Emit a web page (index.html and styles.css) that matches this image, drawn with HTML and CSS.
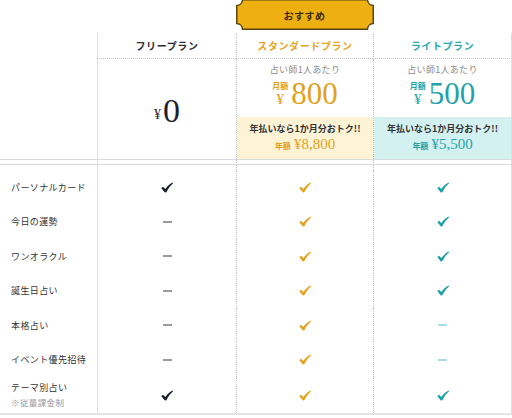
FILE: index.html
```html
<!DOCTYPE html>
<html lang="ja">
<head>
<meta charset="utf-8">
<link rel="stylesheet" href="styles.css">
</head>
<body>
<div class="table">
  <div class="row top">
    <div class="cell"></div>
    <div class="cell"></div>
    <div class="cell">
      <div class="badge">
        <svg class="badge-bg" width="138" height="31" viewBox="0 0 138 31"><path d="M6.5,0.75 H131.5 A6,6 0 0 0 137.25,6.5 V24.5 A6,6 0 0 0 131.5,30.25 H6.5 A6,6 0 0 0 0.75,24.5 V6.5 A6,6 0 0 0 6.5,0.75 Z" fill="#EDB010" stroke="#5b4313" stroke-width="1.5"/></svg>
        <span class="badge-text">おすすめ</span>
      </div>
    </div>
    <div class="cell"></div>
  </div>

  <div class="row head">
    <div class="cell label"></div>
    <div class="cell free"><span class="plan plan-free">フリープラン</span></div>
    <div class="cell std"><span class="plan plan-std">スタンダードプラン</span></div>
    <div class="cell lite"><span class="plan plan-lite">ライトプラン</span></div>
  </div>

  <div class="row price">
    <div class="cell label"></div>
    <div class="cell free price-free">
      <span class="yen-s">¥</span><span class="num">0</span>
    </div>
    <div class="cell std price-col">
      <div class="per">占い師1人あたり</div>
      <div class="amount gold">
        <div class="unit"><span class="monthly">月額</span><span class="yen">¥</span></div>
        <span class="num">800</span>
      </div>
      <div class="annual annual-std">
        <div class="annual-note">年払いなら1か月分おトク!!</div>
        <div class="annual-price gold"><span class="annual-label">年額</span><span class="annual-num">¥8,800</span></div>
      </div>
    </div>
    <div class="cell lite price-col">
      <div class="per">占い師1人あたり</div>
      <div class="amount teal">
        <div class="unit"><span class="monthly">月額</span><span class="yen">¥</span></div>
        <span class="num">500</span>
      </div>
      <div class="annual annual-lite">
        <div class="annual-note">年払いなら1か月分おトク!!</div>
        <div class="annual-price teal"><span class="annual-label">年額</span><span class="annual-num">¥5,500</span></div>
      </div>
    </div>
  </div>

  <div class="row sep">
    <div class="cell label"></div>
    <div class="cell free"></div>
    <div class="cell std"></div>
    <div class="cell lite"></div>
  </div>
  <div class="row spacer">
    <div class="cell label"></div>
    <div class="cell free"></div>
    <div class="cell std"></div>
    <div class="cell lite"></div>
  </div>

  <div class="row item">
    <div class="cell label">パーソナルカード</div>
    <div class="cell free mark"><svg class="check c-dark" viewBox="0 0 12 10"><path d="M0.3,5.4 L2,4.2 L4.3,6.6 C6.3,3.8 8.7,1.6 11.5,0 L12,0.9 C9.3,3.1 7.2,6 5.3,9.8 L3.8,10 Z"/></svg></div>
    <div class="cell std mark"><svg class="check c-gold" viewBox="0 0 12 10"><path d="M0.3,5.4 L2,4.2 L4.3,6.6 C6.3,3.8 8.7,1.6 11.5,0 L12,0.9 C9.3,3.1 7.2,6 5.3,9.8 L3.8,10 Z"/></svg></div>
    <div class="cell lite mark"><svg class="check c-teal" viewBox="0 0 12 10"><path d="M0.3,5.4 L2,4.2 L4.3,6.6 C6.3,3.8 8.7,1.6 11.5,0 L12,0.9 C9.3,3.1 7.2,6 5.3,9.8 L3.8,10 Z"/></svg></div>
  </div>
  <div class="row item">
    <div class="cell label">今日の運勢</div>
    <div class="cell free mark"><span class="dash d-dark"></span></div>
    <div class="cell std mark"><svg class="check c-gold" viewBox="0 0 12 10"><path d="M0.3,5.4 L2,4.2 L4.3,6.6 C6.3,3.8 8.7,1.6 11.5,0 L12,0.9 C9.3,3.1 7.2,6 5.3,9.8 L3.8,10 Z"/></svg></div>
    <div class="cell lite mark"><svg class="check c-teal" viewBox="0 0 12 10"><path d="M0.3,5.4 L2,4.2 L4.3,6.6 C6.3,3.8 8.7,1.6 11.5,0 L12,0.9 C9.3,3.1 7.2,6 5.3,9.8 L3.8,10 Z"/></svg></div>
  </div>
  <div class="row item">
    <div class="cell label">ワンオラクル</div>
    <div class="cell free mark"><span class="dash d-dark"></span></div>
    <div class="cell std mark"><svg class="check c-gold" viewBox="0 0 12 10"><path d="M0.3,5.4 L2,4.2 L4.3,6.6 C6.3,3.8 8.7,1.6 11.5,0 L12,0.9 C9.3,3.1 7.2,6 5.3,9.8 L3.8,10 Z"/></svg></div>
    <div class="cell lite mark"><svg class="check c-teal" viewBox="0 0 12 10"><path d="M0.3,5.4 L2,4.2 L4.3,6.6 C6.3,3.8 8.7,1.6 11.5,0 L12,0.9 C9.3,3.1 7.2,6 5.3,9.8 L3.8,10 Z"/></svg></div>
  </div>
  <div class="row item">
    <div class="cell label">誕生日占い</div>
    <div class="cell free mark"><span class="dash d-dark"></span></div>
    <div class="cell std mark"><svg class="check c-gold" viewBox="0 0 12 10"><path d="M0.3,5.4 L2,4.2 L4.3,6.6 C6.3,3.8 8.7,1.6 11.5,0 L12,0.9 C9.3,3.1 7.2,6 5.3,9.8 L3.8,10 Z"/></svg></div>
    <div class="cell lite mark"><svg class="check c-teal" viewBox="0 0 12 10"><path d="M0.3,5.4 L2,4.2 L4.3,6.6 C6.3,3.8 8.7,1.6 11.5,0 L12,0.9 C9.3,3.1 7.2,6 5.3,9.8 L3.8,10 Z"/></svg></div>
  </div>
  <div class="row item">
    <div class="cell label">本格占い</div>
    <div class="cell free mark"><span class="dash d-dark"></span></div>
    <div class="cell std mark"><svg class="check c-gold" viewBox="0 0 12 10"><path d="M0.3,5.4 L2,4.2 L4.3,6.6 C6.3,3.8 8.7,1.6 11.5,0 L12,0.9 C9.3,3.1 7.2,6 5.3,9.8 L3.8,10 Z"/></svg></div>
    <div class="cell lite mark"><span class="dash d-teal"></span></div>
  </div>
  <div class="row item">
    <div class="cell label">イベント優先招待</div>
    <div class="cell free mark"><span class="dash d-dark"></span></div>
    <div class="cell std mark"><svg class="check c-gold" viewBox="0 0 12 10"><path d="M0.3,5.4 L2,4.2 L4.3,6.6 C6.3,3.8 8.7,1.6 11.5,0 L12,0.9 C9.3,3.1 7.2,6 5.3,9.8 L3.8,10 Z"/></svg></div>
    <div class="cell lite mark"><span class="dash d-teal"></span></div>
  </div>
  <div class="row item last">
    <div class="cell label label-2">
      <span>テーマ別占い</span>
      <span class="sub">※従量課金制</span>
    </div>
    <div class="cell free mark"><svg class="check c-dark" viewBox="0 0 12 10"><path d="M0.3,5.4 L2,4.2 L4.3,6.6 C6.3,3.8 8.7,1.6 11.5,0 L12,0.9 C9.3,3.1 7.2,6 5.3,9.8 L3.8,10 Z"/></svg></div>
    <div class="cell std mark"><svg class="check c-gold" viewBox="0 0 12 10"><path d="M0.3,5.4 L2,4.2 L4.3,6.6 C6.3,3.8 8.7,1.6 11.5,0 L12,0.9 C9.3,3.1 7.2,6 5.3,9.8 L3.8,10 Z"/></svg></div>
    <div class="cell lite mark"><svg class="check c-teal" viewBox="0 0 12 10"><path d="M0.3,5.4 L2,4.2 L4.3,6.6 C6.3,3.8 8.7,1.6 11.5,0 L12,0.9 C9.3,3.1 7.2,6 5.3,9.8 L3.8,10 Z"/></svg></div>
  </div>
</div>
</body>
</html>
```

FILE: styles.css
```css
* { box-sizing: border-box; }
html, body { margin: 0; padding: 0; background: #fff; }
body {
  font-family: "Noto Sans CJK JP", "Noto Sans", sans-serif;
  color: #333;
  width: 512px;
  overflow: hidden;
}
.table { width: 512px; }
.row {
  display: grid;
  grid-template-columns: 97px 139px 137px 139px;
}
.cell { min-width: 0; }
.free { border-left: 1px solid #dcdfe4; }
.std { border-left: 1px dotted #c4c6ca; }
.lite { border-left: 1px dotted #c4c6ca; border-right: 1px solid #dcdfe4; }

/* top */
.top { height: 33px; }
.top .cell { border: none; display: flex; align-items: flex-start; }
.badge {
  position: relative;
  width: 138px;
  height: 31px;
  margin-top: -1px;
  display: flex;
  align-items: center;
  justify-content: center;
}
.badge-bg { position: absolute; left: 0; top: 0; }
.badge-text {
  position: relative;
  font-size: 10px;
  font-weight: bold;
  color: #3a2a0a;
  letter-spacing: 0.5px;
  margin-top: 1px;
}

/* header */
.head { height: 26px; }
.head .cell { display: flex; align-items: center; justify-content: center; }
.head .free, .head .std, .head .lite { border-bottom: 1px dotted #c4c6ca; }
.plan { font-size: 10px; font-weight: bold; letter-spacing: 0.6px; }
.plan-free { color: #2e2e38; }
.plan-std { color: #e6a51c; }
.plan-lite { color: #2aa9b0; }

/* price */
.price { height: 100px; }
.price-free {
  display: flex;
  align-items: center;
  justify-content: center;
  padding-top: 4px;
}
.yen-s {
  font-family: "Liberation Serif", serif;
  font-size: 14px;
  color: #2a2a3a;
  margin-top: 8px;
  margin-right: 2px;
}
.price-free .num {
  font-family: "Liberation Serif", serif;
  font-size: 34px;
  color: #1f1f2e;
  line-height: 1;
}
.price-col { display: flex; flex-direction: column; align-items: stretch; }
.per {
  font-size: 9px;
  color: #8a8a8a;
  text-align: center;
  margin-top: 5px;
  line-height: 12px;
  letter-spacing: 0.3px;
}
.amount {
  display: flex;
  justify-content: center;
  align-items: flex-end;
  margin-top: 3px;
  height: 30px;
}
.unit {
  display: flex;
  flex-direction: column;
  align-items: center;
  margin-right: 3px;
  padding-bottom: 1px;
}
.monthly { font-size: 8px; line-height: 11px; font-weight: bold; }
.yen { font-family: "Liberation Serif", serif; font-size: 15px; line-height: 17px; }
.amount .num {
  font-family: "Liberation Serif", serif;
  font-size: 31px;
  line-height: 30px;
}
.gold { color: #e2a11c; }
.teal { color: #1fa3a8; }
.annual {
  margin-top: auto;
  height: 42px;
  display: flex;
  flex-direction: column;
  align-items: center;
  justify-content: center;
}
.annual-std { background: #fff3d6; }
.annual-lite { background: #d3f1f1; }
.annual-note { font-size: 9px; font-weight: bold; color: #333; line-height: 12px; }
.annual-price { display: flex; align-items: baseline; margin-top: 1px; }
.annual-label { font-size: 8px; font-weight: bold; margin-right: 3px; }
.annual-num { font-family: "Liberation Serif", serif; font-size: 15px; line-height: 17px; }

/* separator */
.sep { height: 6px; }
.sep .cell { border-top: 1px solid #d8dbe0; border-bottom: 1px solid #d8dbe0; }
.spacer { height: 5px; }

/* items */
.item { height: 35px; }
.item:nth-child(even) { height: 34px; }
.item.last { height: 38px; border-bottom: 2px solid #e2e4e8; }
.label {
  display: flex;
  align-items: center;
  padding-left: 11px;
  font-size: 9px;
  color: #333;
  letter-spacing: 0.4px;
}
.label-2 { flex-direction: column; align-items: flex-start; justify-content: center; line-height: 14px; }
.sub { color: #9a9a9a; font-size: 8.5px; }
.mark { display: flex; align-items: center; justify-content: center; }
.check { width: 12px; height: 11px; }
.check path { fill: currentColor; }
.c-dark { color: #1c1d2c; }
.c-gold { color: #e3a21e; }
.c-teal { color: #1e9fa4; }
.dash { display: block; width: 9px; height: 2px; }
.d-dark { background: #9a9a9e; }
.d-teal { background: #a8dee0; }
```
